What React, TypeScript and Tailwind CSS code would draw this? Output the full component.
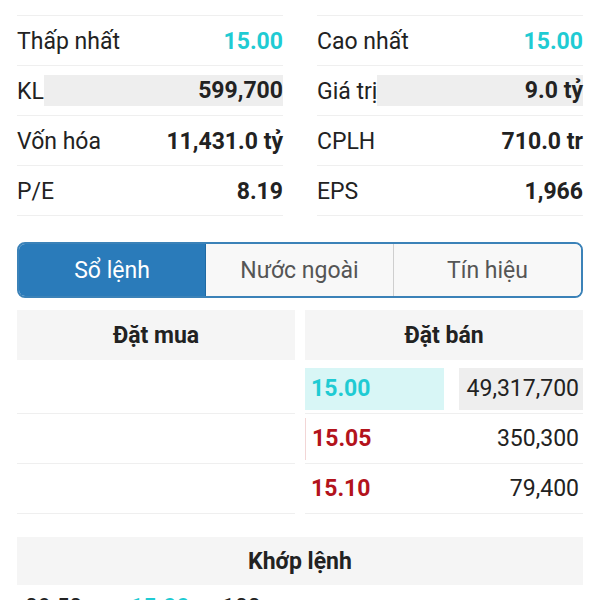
import React from "react";

const stats: [string, string, string, string, boolean][] = [
  ["Thấp nhất", "15.00", "Cao nhất", "15.00", false],
  ["KL", "599,700", "Giá trị", "9.0 tỷ", true],
  ["Vốn hóa", "11,431.0 tỷ", "CPLH", "710.0 tr", false],
  ["P/E", "8.19", "EPS", "1,966", false],
];

function StatCell({ label, value, cyan, shaded }: { label: string; value: string; cyan: boolean; shaded: boolean }) {
  return (
    <div className="h-[50px] flex items-center border-b border-[#efefef] pt-[4px]">
      <span className="text-[23px] text-[#222]">{label}</span>
      {shaded ? (
        <div className="flex-1 h-[31px] bg-[#eeeeee] flex items-center justify-end mt-[-4px] pt-[2px]">
          <span className="text-[23px] font-bold text-[#222]">{value}</span>
        </div>
      ) : (
        <span className={`ml-auto text-[23px] font-bold ${cyan ? "text-[#1fcbd3]" : "text-[#222]"}`}>{value}</span>
      )}
    </div>
  );
}

const asks = [
  { price: "15.00", vol: "49,317,700", cyan: true },
  { price: "15.05", vol: "350,300", cyan: false },
  { price: "15.10", vol: "79,400", cyan: false },
];

export default function App() {
  return (
    <div
      className="w-[600px] h-[600px] overflow-hidden bg-white px-[17px]"
      style={{ fontFamily: "Roboto, 'Noto Sans', sans-serif" }}
    >
      {/* Stats — two columns */}
      <div className="grid grid-cols-2 gap-x-[34px]">
        <div className="h-[16px] border-b border-[#efefef]" />
        <div className="h-[16px] border-b border-[#efefef]" />
        {stats.map(([l1, v1, l2, v2, shaded], i) => (
          <React.Fragment key={i}>
            <StatCell label={l1} value={v1} cyan={i === 0} shaded={shaded} />
            <StatCell label={l2} value={v2} cyan={i === 0} shaded={shaded} />
          </React.Fragment>
        ))}
      </div>

      {/* Tabs */}
      <div className="mt-[26px] h-[56px] flex rounded-[8px] border-2 border-[#3b82b8] overflow-hidden text-[23px]">
        <div className="w-[187px] bg-[#2a7bba] text-white flex items-center justify-center pt-[3px] border-r border-[#1f6aa3]">
          Sổ lệnh
        </div>
        <div className="flex-1 bg-[#f8f8f8] text-[#555] flex items-center justify-center pt-[3px] border-r border-[#cfcfcf]">
          Nước ngoài
        </div>
        <div className="flex-1 bg-[#f8f8f8] text-[#555] flex items-center justify-center pt-[3px]">Tín hiệu</div>
      </div>

      {/* Order book */}
      <div className="mt-[12px] grid grid-cols-2 gap-x-[10px]">
        <div>
          <div className="h-[50px] bg-[#f5f5f5] flex items-center justify-center pt-[2px] text-[23px] font-bold text-[#222]">
            Đặt mua
          </div>
          <div className="h-[4px]" />
          {asks.map((_, i) => (
            <div key={i} className="h-[50px] border-b border-[#efefef]" />
          ))}
        </div>
        <div>
          <div className="h-[50px] bg-[#f5f5f5] flex items-center justify-center pt-[2px] text-[23px] font-bold text-[#222]">
            Đặt bán
          </div>
          <div className="h-[4px]" />
          {asks.map((a, i) => (
            <div key={i} className="h-[50px] border-b border-[#efefef] flex items-center gap-[15px]">
              <div
                className={`w-[139px] h-[42px] flex items-center pl-[6px] pt-[2px] text-[23px] font-bold ${
                  a.cyan ? "bg-[#d8f6f6] text-[#1fcbd3]" : "text-[#b3131c]"
                } ${i === 1 ? "border-l border-[#f2d6d6]" : ""}`}
              >
                {a.price}
              </div>
              <div
                className={`flex-1 h-[42px] flex items-center justify-end pr-[4px] pt-[2px] text-[23px] text-[#222] ${
                  a.cyan ? "bg-[#eeeeee]" : ""
                }`}
              >
                {a.vol}
              </div>
            </div>
          ))}
        </div>
      </div>

      {/* Matched orders */}
      <div className="mt-[23px] h-[48px] bg-[#f5f5f5] flex items-center justify-center pt-[3px] text-[23px] font-bold text-[#222]">
        Khớp lệnh
      </div>
      <div className="mt-[6px] flex text-[23px] text-[#222]">
        <span className="ml-[8px] w-[105px]">09:50</span>
        <span className="w-[92px] font-bold text-[#1fcbd3]">15.00</span>
        <span>100</span>
      </div>
    </div>
  );
}
